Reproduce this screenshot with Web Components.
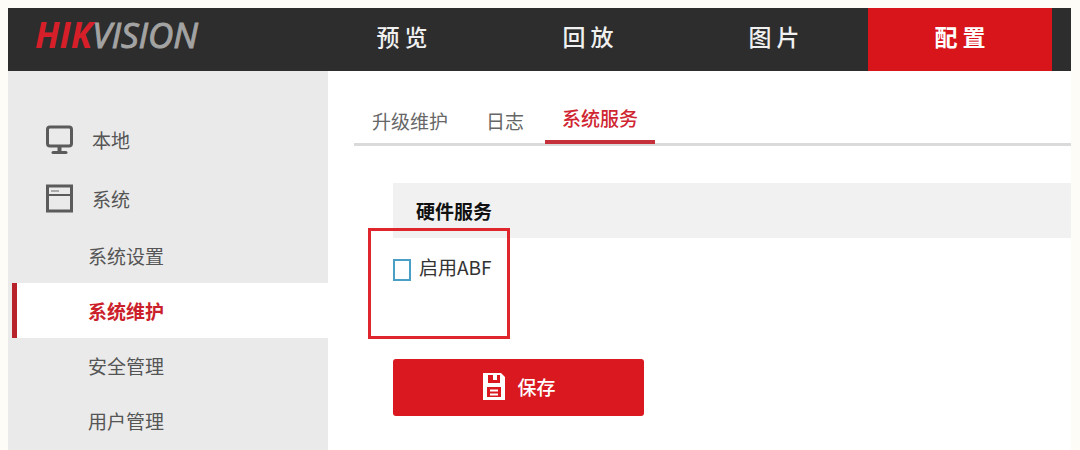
<!DOCTYPE html>
<html lang="zh-CN">
<head>
<meta charset="utf-8">
<title>系统服务</title>
<style>
  body {
    margin: 0;
    background: #fdfcf7;
    font: 19px/28px "Noto Sans CJK SC", sans-serif;
    color: #555;
  }
</style>
</head>
<body>
<config-page></config-page>

<template id="config-page">
  <style>
    :host { display: flex; flex-direction: column; box-sizing: border-box; min-height: 100vh; padding: 8px 9px 0 8px; }
    .body { display: flex; flex: 1; background: #fff; }
    main { flex: 1; min-width: 0; padding: 26px 0 0 26px; }
    .content { padding: 37px 0 32px 39px; }
  </style>
  <top-bar></top-bar>
  <div class="body">
    <side-menu>
      <menu-group icon="monitor">本地</menu-group>
      <menu-group icon="window">系统</menu-group>
      <menu-entry>系统设置</menu-entry>
      <menu-entry current>系统维护</menu-entry>
      <menu-entry>安全管理</menu-entry>
      <menu-entry>用户管理</menu-entry>
    </side-menu>
    <main>
      <tab-strip>
        <tab-link>升级维护</tab-link>
        <tab-link>日志</tab-link>
        <tab-link current>系统服务</tab-link>
      </tab-strip>
      <div class="content">
        <section-title>硬件服务</section-title>
        <check-option>启用ABF</check-option>
        <save-button>保存</save-button>
      </div>
    </main>
  </div>
</template>

<template id="top-bar">
  <style>
    :host { display: grid; grid-template-columns: 302px 1fr; height: 63px; padding-right: 19px; background: #2d2d2d; }
    .logo { padding-left: 27px; font: italic 700 35px/54px "Open Sans", sans-serif; color: #d71f2a; white-space: nowrap; }
    .logo span { font-weight: 400; color: #a3a3a3; -webkit-text-stroke: 1px #a3a3a3; }
    nav { display: grid; grid-template-columns: repeat(4, 1fr); gap: 2px; }
  </style>
  <div class="logo">HIK<span>VISION</span></div>
  <nav>
    <nav-link>预 览</nav-link>
    <nav-link>回 放</nav-link>
    <nav-link>图 片</nav-link>
    <nav-link current>配 置</nav-link>
  </nav>
</template>

<template id="nav-link">
  <style>
    :host { display: block; }
    a { display: block; height: 63px; font-size: 23px; line-height: 56px; font-weight: 500; text-align: center; color: #f0f0f0; text-decoration: none; }
    :host([current]) a { background: #d9151c; color: #fff; font-weight: 700; }
  </style>
  <a href="#"><slot></slot></a>
</template>

<template id="side-menu">
  <style>
    :host { display: block; box-sizing: border-box; width: 320px; padding-top: 39px; background: #eaeaea; }
  </style>
  <nav><slot></slot></nav>
</template>

<template id="menu-group">
  <style>
    :host { display: block; }
    a { display: flex; align-items: center; gap: 18px; height: 59px; padding-left: 37px; color: inherit; text-decoration: none; }
    svg { width: 29px; height: 32px; fill: none; stroke: #5b5b5b; }
  </style>
  <a href="#"><svg viewBox="0 0 29 32" aria-hidden="true"></svg><slot></slot></a>
</template>

<template id="menu-entry">
  <style>
    :host { display: block; margin-left: 4px; }
    a { display: block; padding-left: 71px; border-left: 5px solid transparent; line-height: 55px; color: inherit; text-decoration: none; }
    :host([current]) a { border-color: #b8232b; background: #fff; color: #cb1f2b; font-weight: 700; }
  </style>
  <a href="#"><slot></slot></a>
</template>

<template id="tab-strip">
  <style>
    :host { display: block; border-bottom: 3px solid #dadada; }
    nav { display: flex; align-items: flex-end; gap: 4px; margin-bottom: -1px; padding: 1px 0 0 1px; }
  </style>
  <nav><slot></slot></nav>
</template>

<template id="tab-link">
  <style>
    :host { display: block; }
    a { display: block; padding: 7px 17px 9px; color: #666; text-decoration: none; }
    :host([current]) a { padding: 6px 17px 8px; border-bottom: 4px solid #c5303a; color: #cf2632; font-weight: 500; }
  </style>
  <a href="#"><slot></slot></a>
</template>

<template id="section-title">
  <style>
    :host { display: block; background: #f1f1f1; }
    h2 { margin: 0; padding-left: 23px; font-size: 19px; line-height: 55px; font-weight: 700; color: #111; }
  </style>
  <h2><slot></slot></h2>
</template>

<template id="check-option">
  <style>
    :host { display: block; position: relative; height: 105px; padding-top: 15px; box-sizing: border-box; }
    .mark { position: absolute; left: -25px; top: -10px; width: 136px; height: 105px; border: 3px solid #e0262d; pointer-events: none; }
    label { display: inline-flex; align-items: center; gap: 8px; color: #333; }
    input { appearance: none; box-sizing: border-box; width: 18px; height: 22px; margin: 5px 0 0; border: 2px solid #4a9fc6; background: #fff; }
    input:checked { background: #4a9fc6; }
  </style>
  <label><input type="checkbox"><slot></slot></label>
  <div class="mark"></div>
</template>

<template id="save-button">
  <style>
    :host { display: block; margin-top: 16px; }
    button { display: flex; align-items: center; justify-content: center; gap: 12px; width: 251px; height: 57px; padding: 0 0 2px 2px; border: 0; border-radius: 3px; background: #d9181f; color: #fff; font: inherit; font-weight: 500; }
    svg { width: 22px; height: 27px; }
  </style>
  <button type="button">
    <svg viewBox="0 0 22 27" aria-hidden="true">
      <path fill="#fff" fill-rule="evenodd" d="M0 0H18L22 4V27H0ZM5 2V10H17V2H14V7H10V2ZM4 14V24H18V14Z"/>
      <path stroke="#fff" stroke-width="2" d="M7 17.500H15M7 21.500H15"/>
    </svg>
    <slot></slot>
  </button>
</template>

<script>
  const icons = {
    monitor: '<rect x="2.500" y="3" width="24" height="19" rx="2.500" stroke-width="3"/><path stroke-width="4" d="M14.500 22V28"/><path stroke-width="3" stroke-linecap="round" d="M8 28.500H21"/>',
    window: '<rect x="2.500" y="3" width="24" height="25" stroke-width="3"/><path stroke-width="2" d="M3 12H26"/><path stroke-width="2" stroke="#aaa" d="M6 8H14"/>'
  };

  class Part extends HTMLElement {
    constructor() {
      super();
      const source = document.getElementById(this.localName);
      this.attachShadow({ mode: 'open' }).append(source.content.cloneNode(true));
    }
  }

  class CurrentLink extends Part {
    connectedCallback() {
      if (this.hasAttribute('current')) {
        this.shadowRoot.querySelector('a').setAttribute('aria-current', 'page');
      }
    }
  }

  customElements.define('nav-link', class extends CurrentLink {});
  customElements.define('menu-entry', class extends CurrentLink {});
  customElements.define('tab-link', class extends CurrentLink {});
  customElements.define('menu-group', class extends Part {
    connectedCallback() {
      this.shadowRoot.querySelector('svg').innerHTML = icons[this.getAttribute('icon')];
    }
  });
  for (const name of ['top-bar', 'side-menu', 'tab-strip', 'section-title', 'check-option', 'save-button', 'config-page']) {
    customElements.define(name, class extends Part {});
  }
</script>
</body>
</html>
